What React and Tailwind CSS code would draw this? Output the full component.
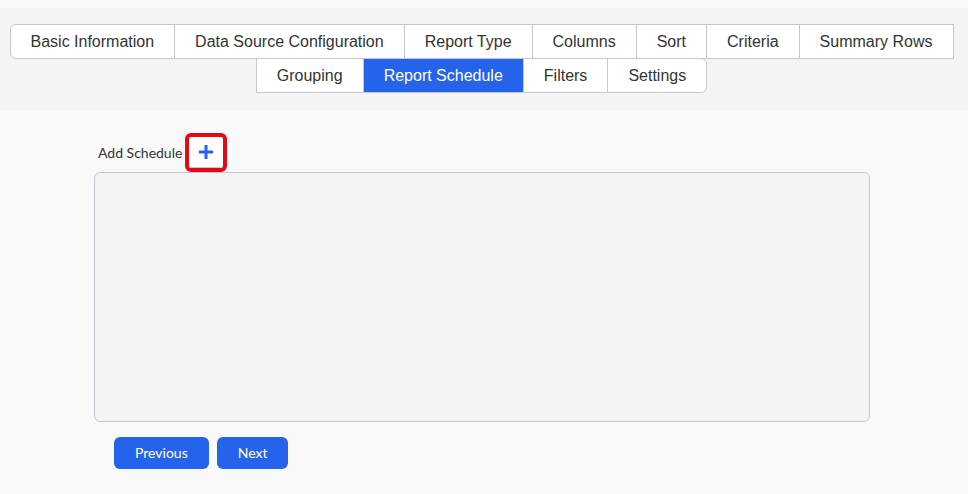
import React, { useState } from "react";

const tabs = [
  "Basic Information",
  "Data Source Configuration",
  "Report Type",
  "Columns",
  "Sort",
  "Criteria",
  "Summary Rows",
  "Grouping",
  "Report Schedule",
  "Filters",
  "Settings",
];

const TabBar = ({ active, onSelect }) => {
  return (
    <div className="flex flex-wrap justify-center pl-[6px] pr-[10px] pt-4">
      {tabs.map((tab, i) => {
        const isActive = tab === active;
        const first = i === 0;
        const last = i === tabs.length - 1;
        return (
          <button
            key={tab}
            onClick={() => onSelect(tab)}
            className={`h-[35px] px-5 -ml-px -mt-px border border-[#c6c6d0] text-base leading-6 ${
              isActive ? "bg-[#2563eb] text-white" : "bg-white text-[#333]"
            } ${first ? "rounded-l-md" : ""} ${last ? "rounded-r-md" : ""}`}
            style={{ fontFamily: "'Liberation Sans', Arial, sans-serif" }}
          >
            {tab}
          </button>
        );
      })}
    </div>
  );
};

export default function App() {
  const [active, setActive] = useState("Report Schedule");

  return (
    <div
      className="min-h-screen bg-[#f9f9f9] pt-2"
      style={{ fontFamily: "Lato, 'Open Sans', sans-serif" }}
    >
      <div className="bg-[#f4f4f4] h-[102px] pt-[1px]">
        <TabBar active={active} onSelect={setActive} />
      </div>

      <div className="ml-[94px] w-[776px] pt-[23px]">
        <div className="flex items-center pl-1">
          <span className="text-sm text-[#333]">Add Schedule</span>
          <div className="ml-[3px] border-[4px] border-[#e50914] rounded-md">
            <button className="w-[34px] h-[31px] bg-white rounded-sm border-b border-[#c6c6d0] flex items-center justify-center">
              <svg width="14" height="14" viewBox="0 0 14 14">
                <path
                  d="M7 1v12M1 7h12"
                  stroke="#2563eb"
                  strokeWidth="3"
                  strokeLinecap="square"
                />
              </svg>
            </button>
          </div>
        </div>

        <div className="h-[250px] bg-[#f4f4f4] border border-[#c6c6d0] rounded-md"></div>

        <div className="flex gap-2 pl-5 mt-[15px]">
          <button className="h-8 px-[21px] rounded-md bg-[#2563eb] text-white text-sm">
            Previous
          </button>
          <button className="h-8 px-[21px] rounded-md bg-[#2563eb] text-white text-sm">
            Next
          </button>
        </div>
      </div>
    </div>
  );
}
